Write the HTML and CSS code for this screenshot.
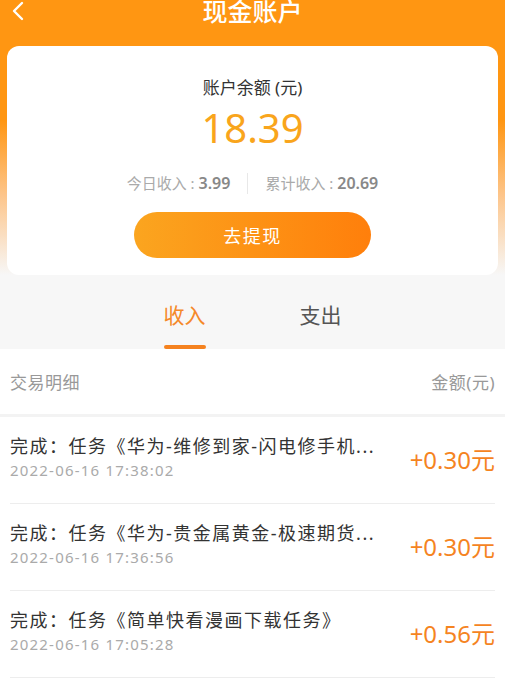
FILE: index.html
```html
<!DOCTYPE html>
<html lang="zh-CN">
<head>
<meta charset="utf-8">
<title>现金账户</title>
<link rel="stylesheet" href="styles.css">
</head>
<body>
<div class="top">
  <div class="nav">
    <svg class="back" width="14" height="20" viewBox="0 0 14 20"><path d="M11 2 L3 10 L11 18" fill="none" stroke="#fff" stroke-width="2.4" stroke-linecap="round" stroke-linejoin="round"/></svg>
    <div class="title">现金账户</div>
  </div>
  <div class="card">
    <div class="bal-label">账户余额 (元)</div>
    <div class="bal">18.39</div>
    <div class="stats">
      <span class="stat">今日收入 : <b>3.99</b></span>
      <span class="sep"></span>
      <span class="stat">累计收入 : <b>20.69</b></span>
    </div>
    <div class="btn">去提现</div>
  </div>
  <div class="tabs">
    <div class="tab active">收入</div>
    <div class="tab">支出</div>
  </div>
</div>
<div class="list">
  <div class="list-head">
    <span>交易明细</span>
    <span>金额(元)</span>
  </div>
  <div class="rows">
    <div class="row">
      <div class="info">
        <div class="name">完成：任务《华为-维修到家-闪电修手机...</div>
        <div class="date">2022-06-16 17:38:02</div>
      </div>
      <div class="amt">+0.30元</div>
    </div>
    <div class="row">
      <div class="info">
        <div class="name">完成：任务《华为-贵金属黄金-极速期货...</div>
        <div class="date">2022-06-16 17:36:56</div>
      </div>
      <div class="amt">+0.30元</div>
    </div>
    <div class="row">
      <div class="info">
        <div class="name">完成：任务《简单快看漫画下载任务》</div>
        <div class="date">2022-06-16 17:05:28</div>
      </div>
      <div class="amt">+0.56元</div>
    </div>
  </div>
</div>
</body>
</html>
```
FILE: styles.css
```css
* { box-sizing: border-box; }
body {
  margin: 0;
  background: #fff;
  font-family: "Noto Sans", "Noto Sans CJK SC", sans-serif;
  color: #333;
}
.top {
  background: linear-gradient(180deg, #ff9612 0px, #ff9612 120px, #fdc58a 195px, #f7f7f7 275px, #f7f7f7 100%);
  padding: 0 7px;
}
.nav {
  height: 46px;
  display: flex;
  align-items: flex-start;
  justify-content: center;
  position: relative;
}
.back {
  position: absolute;
  left: 4px;
  top: 1px;
}
.title {
  font-size: 25px;
  line-height: 26px;
  margin-top: -2px;
  color: #fff;
  font-weight: 500;
}
.card {
  background: #fff;
  border-radius: 12px;
  height: 229px;
  display: flex;
  flex-direction: column;
  align-items: center;
  padding-top: 30px;
}
.bal-label {
  font-size: 17px;
  line-height: 24px;
  color: #333;
}
.bal {
  font-size: 40px;
  line-height: 48px;
  margin-top: 4px;
  color: #f9a51c;
  font-family: "Noto Sans", sans-serif;
}
.stats {
  display: flex;
  align-items: center;
  margin-top: 19px;
  font-size: 15px;
  color: #aaa;
  height: 24px;
}
.stat b {
  font-weight: 600;
  color: #888;
  font-size: 16px;
}
.sep {
  width: 1px;
  height: 21px;
  background: #e8e8e8;
  margin: 0 17px;
}
.btn {
  margin-top: 17px;
  width: 237px;
  height: 46px;
  border-radius: 23px;
  background: linear-gradient(90deg, #fba51f, #ff7f0b);
  color: #fff;
  font-size: 18px;
  display: flex;
  align-items: center;
  justify-content: center;
  letter-spacing: 1.5px;
}
.tabs {
  display: flex;
  justify-content: center;
  gap: 94px;
  height: 74px;
  padding-top: 26px;
}
.tab {
  font-size: 21px;
  line-height: 28px;
  color: #555;
  position: relative;
  height: 48px;
}
.tab.active {
  color: #f5892a;
}
.tab.active::after {
  content: "";
  position: absolute;
  left: 0;
  right: 0;
  bottom: 0;
  height: 4px;
  border-radius: 2px;
  background: #f5821f;
}
.list-head {
  display: flex;
  justify-content: space-between;
  align-items: center;
  height: 68px;
  padding: 0 10px;
  font-size: 17px;
  letter-spacing: 0.5px;
  color: #999;
  border-bottom: 3px solid #f3f3f3;
}
.rows {
  padding: 0 10px;
}
.row {
  display: flex;
  align-items: center;
  justify-content: space-between;
  height: 87px;
  border-bottom: 1px solid #ededed;
  padding-bottom: 6px;
}
.name {
  font-size: 18px;
  line-height: 26px;
  color: #333;
  letter-spacing: 1.5px;
}
.date {
  font-size: 15px;
  line-height: 22px;
  color: #aaa;
  letter-spacing: 1.2px;
}
.amt {
  font-size: 24px;
  color: #f5841f;
  margin-top: 2px;
}
```
